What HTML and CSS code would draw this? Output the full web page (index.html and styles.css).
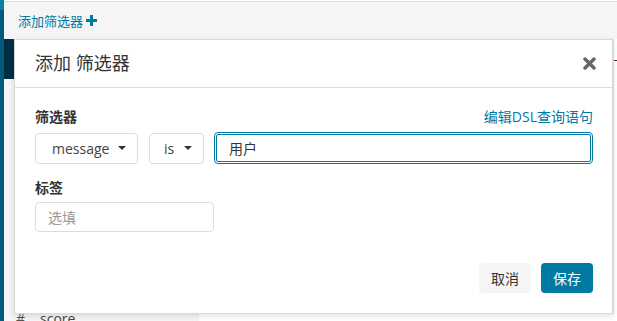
FILE: index.html
```html
<!DOCTYPE html>
<html>

<head>
  <meta charset="UTF-8">
  <title>添加筛选器</title>
  <link rel="stylesheet" href="styles.css">
</head>

<body>
  <div class="rail"></div>

  <div class="main">
    <div class="topbar">
      <a class="add-filter" href="#">添加筛选器
        <svg class="plus" width="11" height="11" viewBox="0 0 11 11">
          <path d="M4 0h3v4h4v3H7v4H4V7H0V4h4z" fill="#0079a5" />
        </svg>
      </a>
    </div>

    <div class="stage">
      <div class="gutter">
        <div class="gutter-block"></div>
      </div>

      <div class="modal">
        <div class="modal-header">
          <h2 class="modal-title">添加 筛选器</h2>
          <svg class="close" width="13" height="13" viewBox="0 0 13 13">
            <path d="M2 2L11 11M11 2L2 11" stroke="#666" stroke-width="3.4" stroke-linecap="round" />
          </svg>
        </div>

        <div class="modal-body">
          <div class="field-head">
            <span class="field-label">筛选器</span>
            <a class="dsl-link" href="#">编辑DSL查询语句</a>
          </div>
          <div class="filter-row">
            <div class="select select-field">message <span class="caret"></span></div>
            <div class="select select-op">is <span class="caret"></span></div>
            <input class="text-input value-input" type="text" value="用户">
          </div>

          <div class="field-head tag-head">
            <span class="field-label">标签</span>
          </div>
          <input class="text-input tag-input" type="text" placeholder="选填">
        </div>

        <div class="modal-footer">
          <button class="btn btn-cancel">取消</button>
          <button class="btn btn-save">保存</button>
        </div>
      </div>

      <div class="right-edge">
        <span class="dash"></span>
      </div>
    </div>

    <div class="under-row">
      <span class="hash">#</span>
      <span class="under-name">score</span>
    </div>
  </div>
</body>

</html>
```

FILE: styles.css
```css
* {
  margin: 0;
  padding: 0;
  box-sizing: border-box;
}

body {
  font-family: "Open Sans", "Noto Sans CJK SC", sans-serif;
  width: 617px;
  height: 321px;
  overflow: hidden;
  display: flex;
  background: #fff;
  color: #333;
}

/* 左侧导航条 */
.rail {
  width: 4px;
  flex-shrink: 0;
  background: linear-gradient(#0a7ea8 0, #0a7ea8 10px, #005a7c 10px);
}

.main {
  flex: 1;
  display: flex;
  flex-direction: column;
  min-width: 0;
}

/* 顶部筛选栏 */
.topbar {
  height: 38px;
  flex-shrink: 0;
  margin-top: 1px;
  border-top: 1px solid #ddd;
  background: #f5f5f5;
  padding-left: 14px;
  display: flex;
  align-items: center;
}

.add-filter {
  color: #0079a5;
  text-decoration: none;
  font-size: 13px;
  display: flex;
  align-items: center;
  gap: 3px;
}

.stage {
  display: flex;
  height: 276px;
  flex-shrink: 0;
}

.gutter {
  width: 10px;
  flex-shrink: 0;
  background: #f5f5f5;
}

.gutter-block {
  height: 40px;
  background: #002f45;
}

/* 弹窗 */
.modal {
  width: 599px;
  flex-shrink: 0;
  height: 275px;
  background: #fff;
  border: 1px solid #dadada;
  box-shadow: 0 2px 6px rgba(0, 0, 0, 0.12);
  display: flex;
  flex-direction: column;
  position: relative;
  z-index: 2;
}

.modal-header {
  height: 48px;
  padding: 0 16px 0 20px;
  border-bottom: 1px solid #dedede;
  display: flex;
  align-items: center;
  justify-content: space-between;
}

.modal-title {
  font-size: 18px;
  font-weight: normal;
  color: #333;
  line-height: 24px;
  margin-top: -1px;
}

.modal-body {
  padding: 18px 19px 0 20px;
}

.field-head {
  display: flex;
  justify-content: space-between;
  align-items: center;
  height: 20px;
  margin-bottom: 6px;
}

.field-label {
  font-size: 14px;
  font-weight: bold;
  color: #333;
}

.dsl-link {
  font-size: 14px;
  color: #0079a5;
  text-decoration: none;
}

.filter-row {
  display: flex;
  align-items: center;
  gap: 10px;
}

.select {
  height: 31px;
  border: 1px solid #ddd;
  border-radius: 4px;
  font-size: 14px;
  color: #444;
  display: flex;
  align-items: center;
  justify-content: space-between;
  padding: 0 11px 0 16px;
}

.select-field {
  width: 103px;
}

.select-op {
  width: 55px;
  margin-left: 1px;
  padding-left: 14px;
}

.caret {
  width: 0;
  height: 0;
  border-left: 4px solid transparent;
  border-right: 4px solid transparent;
  border-top: 4px solid #333;
}

.text-input {
  font-family: "Open Sans", "Noto Sans CJK SC", sans-serif;
  font-size: 14px;
  color: #333;
  border: 1px solid #ddd;
  border-radius: 4px;
  padding: 0 12px;
  outline: none;
}

.text-input::placeholder {
  color: #999;
}

.value-input {
  flex: 1;
  height: 32px;
  border: 3px double #0079a5;
  padding-left: 12px;
}

.tag-head {
  margin-top: 13px;
  margin-bottom: 5px;
}

.tag-input {
  width: 179px;
  height: 30px;
}

.modal-footer {
  margin-top: auto;
  padding: 0 19px 20px 0;
  display: flex;
  justify-content: flex-end;
  gap: 10px;
}

.btn {
  height: 30px;
  width: 52px;
  border: none;
  border-radius: 4px;
  font-family: "Open Sans", "Noto Sans CJK SC", sans-serif;
  font-size: 14px;
  cursor: pointer;
}

.btn-cancel {
  background: #f5f5f5;
  color: #333;
}

.btn-save {
  background: #0079a5;
  color: #fff;
}

/* 右侧露出的背景 */
.right-edge {
  flex: 1;
  border-left: 1px solid #e4e4e4;
  padding-top: 21px;
}

.dash {
  display: block;
  width: 4px;
  height: 1px;
  background: #4a2a4a;
}

/* 弹窗下方的字段列表 */
.under-row {
  display: flex;
  align-items: center;
  height: 14px;
  width: 195px;
  margin-top: -3px;
  padding-left: 12px;
  background: #f5f5f5;
  font-size: 14px;
  color: #444;
  line-height: 14px;
}

.hash {
  width: 24px;
  color: #555;
}
```
